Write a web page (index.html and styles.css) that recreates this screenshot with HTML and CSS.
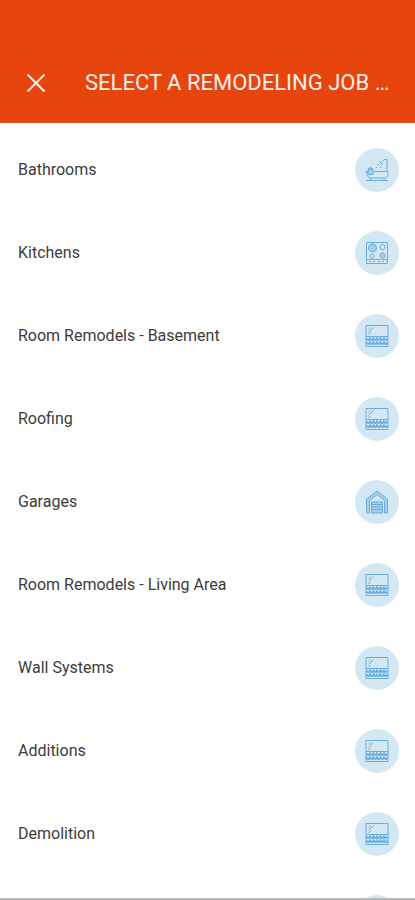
FILE: index.html
```html
<!DOCTYPE html>
<html lang="en">
<head>
<meta charset="utf-8">
<meta name="viewport" content="width=device-width, initial-scale=1">
<title>Select a remodeling job</title>
<link rel="stylesheet" href="styles.css">
</head>
<body>
<svg class="sprite" aria-hidden="true">
  <symbol id="bath" viewBox="0 0 24 24">
    <path d="M1 13.500h22v2c0 3-1.500 4.500-4 4.500H6c-2.500 0-4-1.500-4-4.500zM22 13V1.500h-3l-3 3M14 3l4 4M14 6l-1.500 1.500M16.500 8l-1.500 2M12 9l-1.500 1.500M5 20v2M19 20v2M1 22.500h22"/>
    <path class="tint" d="M3 11.500h5v5H3zM3 11.500l1-1.500h3l1 1.500"/>
  </symbol>
  <symbol id="stove" viewBox="0 0 24 24">
    <path d="M1.500 1.500h21v21h-21zM1.500 18.500h21M4 20.500h2M8 20.500h2M13 20.500h2M17 20.500h2M7.500 2v10M3 7h9"/>
    <circle class="tint" cx="7.500" cy="7" r="4"/><circle cx="17.500" cy="6" r="2.500"/><circle cx="7" cy="15" r="2"/><circle class="tint" cx="17.500" cy="14.500" r="2.500"/>
  </symbol>
  <symbol id="wall" viewBox="0 0 24 24">
    <path d="M1 1.500h22v21H1zM1 12.500h22M3.500 8.500l5-5M3.500 5.500l2-2M3.500 11l2-2"/>
    <path class="tiles" d="M1.500 14.500q1.750 3 3.500 0q1.750 3 3.500 0q1.750 3 3.500 0q1.750 3 3.500 0q1.750 3 3.500 0q1.750 3 3.500 0M1.500 18.500q1.750 3 3.500 0q1.750 3 3.500 0q1.750 3 3.500 0q1.750 3 3.500 0q1.750 3 3.500 0q1.750 3 3.500 0"/>
  </symbol>
  <symbol id="garage" viewBox="0 0 24 24">
    <path class="tint" d="M1.500 9L12 1 22.500 9v14H19.500V10.500L12 4.500l-7.500 6V23h-3z"/>
    <path class="tint" d="M6.500 12h11v11h-11z"/><path d="M6.500 14.500h11M6.500 17h11M6.500 19.500h11"/>
  </symbol>
</svg>
<header class="bar">
  <button class="close" type="button" aria-label="Close">
    <svg class="cross" viewBox="0 0 20 20"><path d="M1.500 1.500l17 17M18.500 1.500l-17 17"/></svg>
  </button>
  <h1 class="title">SELECT A REMODELING JOB …</h1>
</header>
<main class="jobs">
  <button class="job" type="button"><span>Bathrooms</span><span class="badge"><svg class="icon"><use href="#bath"/></svg></span></button>
  <button class="job" type="button"><span>Kitchens</span><span class="badge"><svg class="icon"><use href="#stove"/></svg></span></button>
  <button class="job" type="button"><span>Room Remodels - Basement</span><span class="badge"><svg class="icon"><use href="#wall"/></svg></span></button>
  <button class="job" type="button"><span>Roofing</span><span class="badge"><svg class="icon"><use href="#wall"/></svg></span></button>
  <button class="job" type="button"><span>Garages</span><span class="badge"><svg class="icon"><use href="#garage"/></svg></span></button>
  <button class="job" type="button"><span>Room Remodels - Living Area</span><span class="badge"><svg class="icon"><use href="#wall"/></svg></span></button>
  <button class="job" type="button"><span>Wall Systems</span><span class="badge"><svg class="icon"><use href="#wall"/></svg></span></button>
  <button class="job" type="button"><span>Additions</span><span class="badge"><svg class="icon"><use href="#wall"/></svg></span></button>
  <button class="job" type="button"><span>Demolition</span><span class="badge"><svg class="icon"><use href="#wall"/></svg></span></button>
  <div class="job"><span></span><span class="badge"></span></div>
</main>
</body>
</html>
```
FILE: styles.css
```css
* { box-sizing: border-box; }
body {
  margin: 0;
  height: 100vh;
  display: flex;
  flex-direction: column;
  overflow: hidden;
  background: #fff;
  color: #3c3c3c;
  font-family: Roboto, sans-serif;
  border-bottom: 2px solid #b8b8b8;
}
.sprite { display: none; }
.bar {
  flex: none;
  display: flex;
  align-items: center;
  gap: 33px;
  padding: 59px 16px 17px 20px;
  background: #e8440e;
  color: #fff1eb;
}
.close {
  flex: none;
  display: grid;
  place-items: center;
  width: 32px;
  height: 47px;
  padding: 0;
  border: 0;
  background: none;
  color: inherit;
}
.cross {
  width: 20px;
  height: 20px;
  fill: none;
  stroke: currentColor;
  stroke-width: 2;
}
.title {
  margin: 0;
  font-size: 22px;
  line-height: 28px;
  font-weight: 400;
  white-space: nowrap;
}
.jobs {
  flex: 1;
  min-height: 0;
  padding-top: 5px;
  overflow: hidden;
}
.job {
  display: flex;
  align-items: center;
  justify-content: space-between;
  width: 100%;
  height: 83px;
  padding: 0 16px 0 18px;
  border: 0;
  background: none;
  color: inherit;
  font: inherit;
  font-size: 16px;
  line-height: 20px;
  text-align: left;
}
.badge {
  display: grid;
  place-items: center;
  width: 44px;
  height: 44px;
  border-radius: 50%;
  background: #d3e8f3;
}
.icon {
  width: 24px;
  height: 24px;
  fill: none;
  stroke: #6aaedf;
  stroke-width: 1;
}
.tint { fill: #a5cfec; }
.tiles { stroke-width: 2; }
```
